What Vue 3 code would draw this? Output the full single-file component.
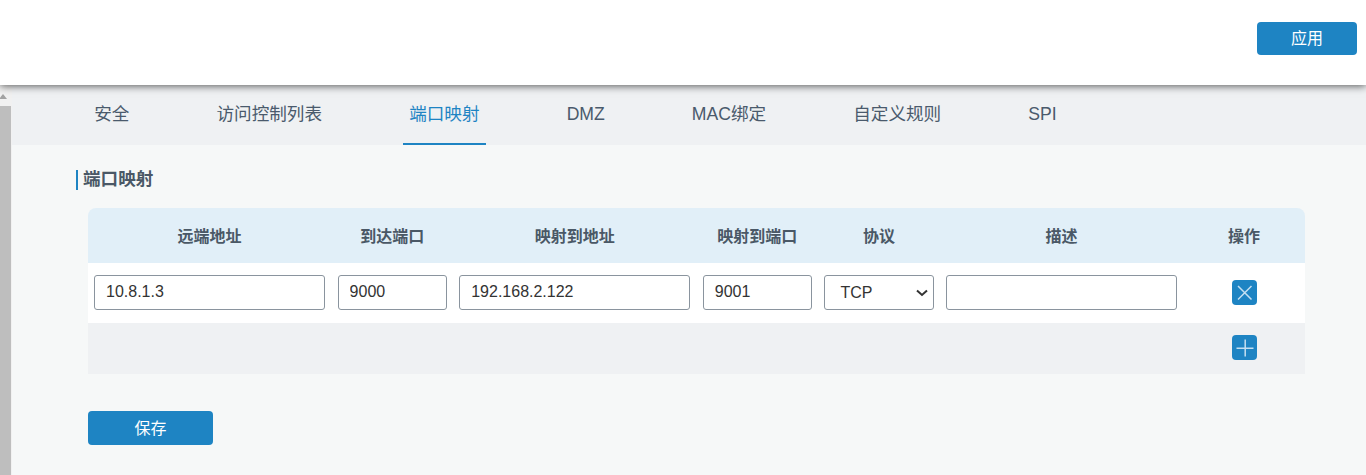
<template>
  <div class="page">
    <header class="topbar">
      <button class="btn btn-apply">应用</button>
    </header>
    <div class="body-wrap">
      <div class="scrollbar">
        <div class="scroll-arrow"></div>
        <div class="scroll-thumb"></div>
      </div>
      <main class="main">
        <nav class="tabs">
          <a
            v-for="tab in tabs"
            :key="tab"
            class="tab"
            :class="{ active: tab === activeTab }"
          >{{ tab }}</a>
        </nav>
        <section class="content">
          <h3 class="section-title">端口映射</h3>
          <div class="table">
            <div class="row head">
              <div v-for="col in columns" :key="col" class="cell">{{ col }}</div>
            </div>
            <div class="row item">
              <div class="cell"><input class="field" value="10.8.1.3" /></div>
              <div class="cell"><input class="field" value="9000" /></div>
              <div class="cell"><input class="field" value="192.168.2.122" /></div>
              <div class="cell"><input class="field" value="9001" /></div>
              <div class="cell">
                <div class="select-wrap">
                  <select class="field select">
                    <option>TCP</option>
                    <option>UDP</option>
                  </select>
                  <svg class="chevron" width="12" height="8" viewBox="0 0 12 8">
                    <path d="M1 1.5 L6 6 L11 1.5" stroke="#333" stroke-width="2" fill="none" />
                  </svg>
                </div>
              </div>
              <div class="cell"><input class="field" value="" /></div>
              <div class="cell action-cell">
                <button class="icon-btn" title="删除">
                  <svg width="25" height="25" viewBox="0 0 25 25">
                    <path d="M6 6 L19.5 19.5 M19.5 6 L6 19.5" stroke="#c4dff1" stroke-width="1.5" fill="none" />
                  </svg>
                </button>
              </div>
            </div>
            <div class="row add">
              <div class="cell action-cell add-cell">
                <button class="icon-btn" title="添加">
                  <svg width="25" height="25" viewBox="0 0 25 25">
                    <path d="M13.2 4.5 V21.5 M4.5 13.2 H21.5" stroke="#c4dff1" stroke-width="1.5" fill="none" />
                  </svg>
                </button>
              </div>
            </div>
          </div>
          <button class="btn btn-save">保存</button>
        </section>
      </main>
    </div>
  </div>
</template>

<script setup>
const tabs = ['安全', '访问控制列表', '端口映射', 'DMZ', 'MAC绑定', '自定义规则', 'SPI']
const activeTab = '端口映射'
const columns = ['远端地址', '到达端口', '映射到地址', '映射到端口', '协议', '描述', '操作']
</script>

<style>
html,
body {
  margin: 0;
  overflow: hidden;
}
</style>

<style scoped>
.page {
  width: 1366px;
  height: 475px;
  overflow: hidden;
  display: flex;
  flex-direction: column;
  font-family: "Liberation Sans", "Noto Sans CJK SC", sans-serif;
  color: #4a5866;
  background: #f6f8f8;
}

.topbar {
  height: 85px;
  flex-shrink: 0;
  background: #fff;
  display: flex;
  justify-content: flex-end;
  align-items: flex-start;
  padding: 22px 9px 0 0;
  box-sizing: border-box;
  box-shadow: 0 1px 8px rgba(0, 0, 0, 0.65);
  position: relative;
  z-index: 2;
}

.btn {
  background: #1e84c3;
  color: #fff;
  border: none;
  border-radius: 4px;
  font-family: inherit;
  font-size: 16px;
  line-height: 30px;
  padding: 1px 0 0;
}

.btn-apply {
  width: 100px;
  height: 33px;
}

.body-wrap {
  flex: 1;
  display: flex;
  min-height: 0;
}

.scrollbar {
  width: 12px;
  flex-shrink: 0;
  display: flex;
  flex-direction: column;
  background: #f1f1f1;
}

.scroll-arrow {
  height: 21px;
  flex-shrink: 0;
  position: relative;
}

.scroll-arrow::before {
  content: "";
  position: absolute;
  left: -1px;
  top: 9px;
  border-left: 4px solid transparent;
  border-right: 4px solid transparent;
  border-bottom: 5px solid #a3a3a3;
}

.scroll-thumb {
  flex: 1;
  width: 11px;
  background: #bebebe;
}

.main {
  flex: 1;
  min-width: 0;
}

.tabs {
  height: 60px;
  background: #eff1f3;
  display: flex;
  gap: 74.1px;
  padding-left: 75.7px;
  box-sizing: border-box;
}

.tab {
  height: 60px;
  line-height: 59px;
  padding: 0 6.5px;
  box-sizing: border-box;
  font-size: 17.6px;
  white-space: nowrap;
  color: #4a5a6c;
}

.tab.active {
  color: #1e84c3;
  border-bottom: 2px solid #1e84c3;
}

.content {
  padding: 25px 61px 0 76px;
}

.section-title {
  margin: 0 0 18px -12px;
  height: 20px;
  line-height: 19px;
  padding-left: 5px;
  border-left: 2px solid #1e84c3;
  font-size: 17.6px;
  font-weight: 700;
  color: #4a5866;
}

.table {
  border-radius: 8px 8px 0 0;
  overflow: hidden;
}

.row {
  display: grid;
  grid-template-columns: 243.6px 121.6px 243.6px 121.6px 121.6px 243.4px 121.6px;
  align-items: center;
}

.head {
  height: 55px;
  padding-bottom: 1px;
  box-sizing: border-box;
  background: #e1eff8;
  font-size: 16px;
  font-weight: 700;
  text-align: center;
  color: #4a5866;
}

.item {
  height: 60px;
  padding-bottom: 2px;
  box-sizing: border-box;
  background: #fff;
}

.add {
  height: 51px;
  padding-bottom: 2px;
  box-sizing: border-box;
  background: #eff1f3;
}

.add-cell {
  grid-column: 7;
}

.cell {
  padding: 0 6.5px 0 6px;
  min-width: 0;
  text-align: center;
}

.action-cell {
  padding: 0 6px 0 6px;
}

.field {
  display: block;
  width: 100%;
  height: 35px;
  box-sizing: border-box;
  border: 1px solid #8a949e;
  border-radius: 3px;
  background: #fff;
  padding: 0 11px;
  font-family: inherit;
  font-size: 16px;
  color: #333;
  outline: none;
}

.select-wrap {
  position: relative;
}

.select {
  appearance: none;
  width: calc(100% + 0.5px);
  padding-left: 15px;
}

.chevron {
  position: absolute;
  right: 5px;
  top: 14px;
  pointer-events: none;
}

.icon-btn {
  display: inline-block;
  vertical-align: middle;
  width: 25px;
  height: 25px;
  padding: 0;
  border: none;
  border-radius: 4px;
  background: #1e84c3;
}

.icon-btn svg {
  display: block;
}

.btn-save {
  display: block;
  width: 125px;
  height: 34px;
  margin-top: 37px;
}
</style>
